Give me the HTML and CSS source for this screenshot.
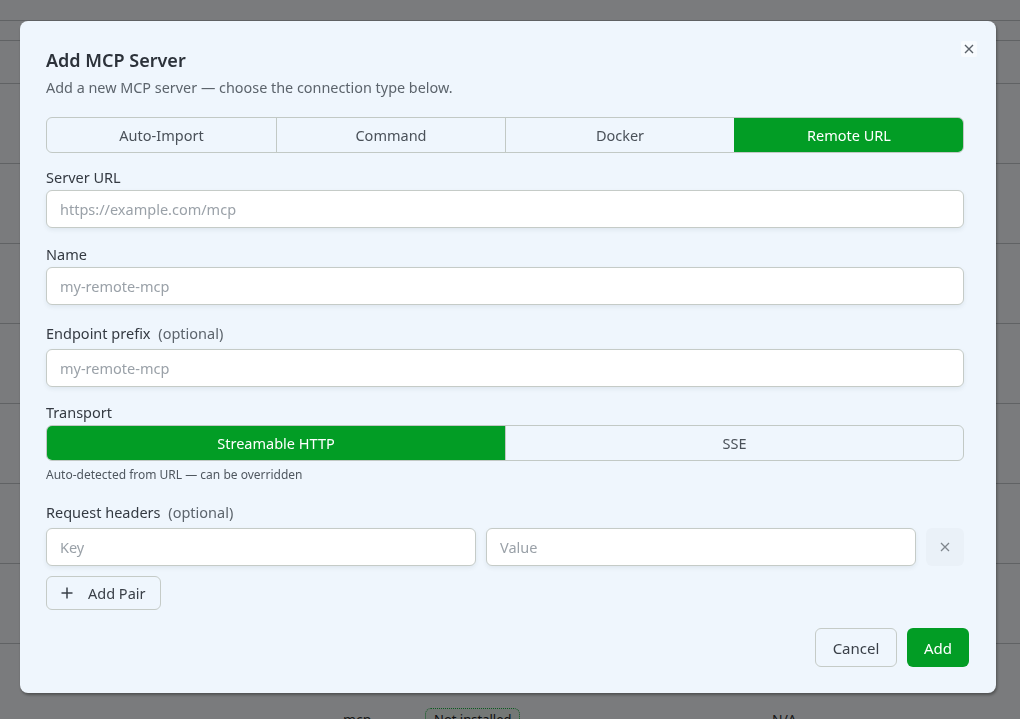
FILE: index.html
```html
<!DOCTYPE html>
<html lang="en">
<head>
    <meta charset="UTF-8">
    <meta name="viewport" content="width=device-width, initial-scale=1.0">
    <title>Add MCP Server</title>
    <link rel="stylesheet" href="styles.css">
</head>
<body>
    <!-- page behind the modal -->
    <div class="page">
        <div class="row row-top"></div>
        <div class="row row-head"></div>
        <div class="row row-sm"></div>
        <div class="row"></div>
        <div class="row"></div>
        <div class="row"></div>
        <div class="row"></div>
        <div class="row"></div>
        <div class="row"></div>
        <div class="row"></div>
        <div class="row row-last">
            <span class="cell-name">mcp</span>
            <span class="badge">Not installed</span>
            <span class="cell-na">N/A</span>
        </div>
    </div>

    <div class="overlay"></div>

    <div class="dialog">
        <button class="close-btn" aria-label="Close">
            <svg width="10" height="10" viewBox="0 0 10 10"><path d="M1 1L9 9M9 1L1 9" stroke="currentColor" stroke-width="1.4" fill="none"/></svg>
        </button>

        <div class="dialog-body">
            <h2 class="title">Add MCP Server</h2>
            <p class="subtitle">Add a new MCP server — choose the connection type below.</p>

            <div class="tabs">
                <button class="tab">Auto-Import</button>
                <button class="tab">Command</button>
                <button class="tab">Docker</button>
                <button class="tab active">Remote URL</button>
            </div>

            <div class="field first">
                <label class="label">Server URL</label>
                <input class="input" type="text" placeholder="https://example.com/mcp">
            </div>

            <div class="field">
                <label class="label">Name</label>
                <input class="input" type="text" placeholder="my-remote-mcp">
            </div>

            <div class="field optional">
                <label class="label">Endpoint prefix <span class="opt">(optional)</span></label>
                <input class="input" type="text" placeholder="my-remote-mcp">
            </div>

            <div class="field transport">
                <label class="label">Transport</label>
                <div class="segments">
                    <button class="segment active">Streamable HTTP</button>
                    <button class="segment">SSE</button>
                </div>
                <p class="hint">Auto-detected from URL — can be overridden</p>
            </div>

            <div class="field optional headers">
                <label class="label">Request headers <span class="opt">(optional)</span></label>
                <div class="pair">
                    <input class="input" type="text" placeholder="Key">
                    <input class="input" type="text" placeholder="Value">
                    <button class="remove-btn" aria-label="Remove">
                        <svg width="10" height="10" viewBox="0 0 10 10"><path d="M1 1L9 9M9 1L1 9" stroke="currentColor" stroke-width="1.3" fill="none"/></svg>
                    </button>
                </div>
                <button class="add-pair">
                    <svg width="12" height="12" viewBox="0 0 12 12"><path d="M6 0.5V11.5M0.5 6H11.5" stroke="currentColor" stroke-width="1.5" fill="none"/></svg>
                    <span>Add Pair</span>
                </button>
            </div>
        </div>

        <div class="footer">
            <button class="btn btn-cancel">Cancel</button>
            <button class="btn btn-add">Add</button>
        </div>
    </div>
</body>
</html>
```

FILE: styles.css
```css
/* Base */
* {
    box-sizing: border-box;
}

body {
    margin: 0;
    font-family: 'Noto Sans', 'Open Sans', sans-serif;
    background-color: #f4f7fa;
    overflow: hidden;
}

button, input {
    font-family: inherit;
}

/* Page behind the modal */
.page {
    height: 719px;
    padding-top: 1px;
}

.row {
    height: 80px;
    border-bottom: 1px solid #c0c4c8;
    position: relative;
}

.row-top {
    height: 20px;
}

.row-head {
    height: 20px;
}

.row-sm {
    height: 43px;
}

.row-last {
    border-bottom: none;
}

.cell-name {
    position: absolute;
    left: 343px;
    top: 66px;
    font-size: 14px;
    color: #333;
}

.badge {
    position: absolute;
    left: 425px;
    top: 64px;
    padding: 1px 8px;
    border: 1px dotted #19b941;
    border-radius: 6px;
    font-size: 13px;
    color: #222;
    background: #e8f0ec;
}

.cell-na {
    position: absolute;
    left: 772px;
    top: 66px;
    font-size: 14px;
    color: #333;
}

.overlay {
    position: fixed;
    inset: 0;
    background-color: rgba(0, 0, 0, 0.5);
}

/* Dialog */
.dialog {
    position: fixed;
    left: 20px;
    top: 21px;
    width: 976px;
    height: 672px;
    background-color: #eff6fd;
    border-radius: 8px;
    box-shadow: 1px 2px 3px rgba(0, 0, 0, 0.35);
    padding: 27px 27px 26px 26px;
    display: flex;
    flex-direction: column;
}

.close-btn {
    position: absolute;
    top: 20px;
    right: 19px;
    width: 16px;
    height: 16px;
    padding: 0;
    border: none;
    border-radius: 2px;
    background-color: #f8fbfe;
    color: #5a6169;
    display: flex;
    align-items: center;
    justify-content: center;
    cursor: pointer;
}

.dialog-body {
    padding-right: 5px;
    flex: 1;
}

.title {
    margin: 0;
    font-size: 18px;
    line-height: 24px;
    font-weight: 600;
    color: #2c323a;
}

.subtitle {
    margin: 6px 0 0;
    font-size: 14.4px;
    line-height: 20px;
    color: #5c646c;
}

/* Connection type tabs */
.tabs {
    margin-top: 19px;
    display: grid;
    grid-template-columns: repeat(4, 1fr);
    height: 36px;
    border: 1px solid #c2c9c5;
    border-radius: 6px;
    overflow: hidden;
    background-color: #eff6fd;
}

.tab, .segment {
    border: none;
    border-left: 1px solid #c2c9c5;
    background: transparent;
    font-size: 14.5px;
    color: #4a5159;
    cursor: pointer;
}

.tab:first-child, .segment:first-child {
    border-left: none;
}

.tab.active, .segment.active {
    background-color: #029d25;
    color: #ffffff;
    border-left-color: #029d25;
}

/* Form fields */
.field {
    margin-top: 16px;
}

.field.first {
    margin-top: 14px;
}

.field.optional {
    margin-top: 18px;
}

.field.transport {
    margin-top: 15px;
}

.field.headers {
    margin-top: 19px;
}

.label {
    display: block;
    font-size: 14.5px;
    line-height: 20px;
    color: #343a42;
    margin-bottom: 3px;
}

.field.optional .label {
    margin-bottom: 6px;
}

.opt {
    color: #5c646c;
    margin-left: 4px;
}

.input {
    display: block;
    width: 100%;
    height: 38px;
    padding: 0 13px;
    border: 1px solid #c5cbc7;
    border-radius: 6px;
    background-color: #ffffff;
    box-shadow: 0 2px 4px rgba(40, 60, 80, 0.08);
    font-size: 14.5px;
    color: #333;
    outline: none;
}

.input::placeholder {
    color: #9aa1a8;
}

/* Transport segments */
.segments {
    display: grid;
    grid-template-columns: 1fr 1fr;
    height: 36px;
    border: 1px solid #c2c9c5;
    border-radius: 6px;
    overflow: hidden;
}

.hint {
    margin: 6px 0 0;
    font-size: 12px;
    line-height: 16px;
    color: #4f575f;
}

/* Request headers */
.pair {
    display: grid;
    grid-template-columns: 1fr 1fr 38px;
    gap: 10px;
}

.remove-btn {
    height: 38px;
    border: none;
    border-radius: 6px;
    background-color: #eaf1f8;
    color: #7f868d;
    display: flex;
    align-items: center;
    justify-content: center;
    cursor: pointer;
}

.add-pair {
    margin-top: 10px;
    height: 34px;
    padding: 0 14px;
    display: flex;
    align-items: center;
    gap: 15px;
    border: 1px solid #c5cbc7;
    border-radius: 6px;
    background-color: #eff6fd;
    font-size: 14.5px;
    color: #3a4048;
    cursor: pointer;
}

/* Footer */
.footer {
    display: flex;
    justify-content: flex-end;
    gap: 10px;
}

.btn {
    height: 39px;
    border-radius: 6px;
    font-size: 15px;
    cursor: pointer;
}

.btn-cancel {
    width: 82px;
    border: 1px solid #c5cbc7;
    background-color: #eff6fd;
    color: #3a4048;
}

.btn-add {
    width: 62px;
    border: none;
    background-color: #029d25;
    color: #ffffff;
}
```
